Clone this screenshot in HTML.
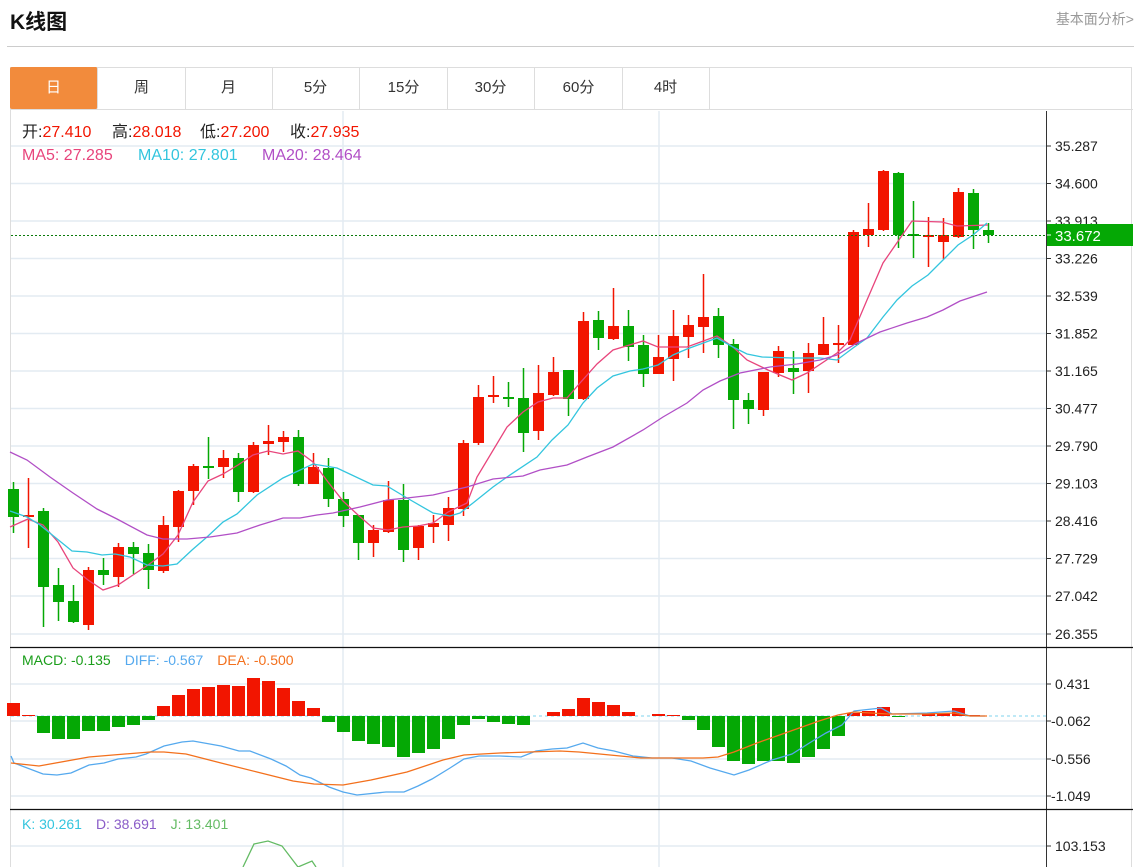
<!DOCTYPE html>
<html><head><meta charset="utf-8">
<style>
body{margin:0;background:#fff;width:1147px;height:867px;overflow:hidden;font-family:"Liberation Sans","Noto Sans CJK SC",sans-serif;position:relative}
.title{position:absolute;left:10px;top:6px;font-size:21px;font-weight:bold;color:#111}
.more{position:absolute;right:13px;top:9px;font-size:14px;color:#999}
.hr{position:absolute;left:7px;top:46px;width:1127px;height:1px;background:#ccc}
.frame{position:absolute;left:10px;top:67px;width:1122px;height:800px;border:1px solid #ddd;border-bottom:none;box-sizing:border-box}
.tabs{position:absolute;left:10px;top:67px;height:43px;width:1123px;border-bottom:1px solid #ddd;box-sizing:border-box}
.tab{position:absolute;top:0;height:42px;width:88px;line-height:42px;text-align:center;font-size:15px;color:#333;border-right:1px solid #ddd;box-sizing:border-box}
.tab.on{background:#f28b3c;color:#fff;border-radius:2px}
svg{position:absolute;left:0;top:0}
svg text{font-family:"Liberation Sans","Noto Sans CJK SC",sans-serif}
</style></head><body>
<div class="title">K线图</div>
<div class="more">基本面分析&gt;</div>
<div class="hr"></div>
<div class="frame"></div>
<div class="tabs">
<div class="tab on" style="left:0">日</div>
<div class="tab" style="left:88px">周</div>
<div class="tab" style="left:175px">月</div>
<div class="tab" style="left:262px">5分</div>
<div class="tab" style="left:350px">15分</div>
<div class="tab" style="left:437px">30分</div>
<div class="tab" style="left:525px">60分</div>
<div class="tab" style="left:612px">4时</div>
</div>
<svg id="s" width="1147" height="867" xmlns="http://www.w3.org/2000/svg"></svg>
<script>
var s='';
function L(x1,y1,x2,y2,c,w,extra){s+='<line x1="'+x1+'" y1="'+y1+'" x2="'+x2+'" y2="'+y2+'" stroke="'+c+'" stroke-width="'+(w||1)+'" '+(extra||'')+'/>';}
function T(x,y,t,c,sz){s+='<text x="'+x+'" y="'+y+'" fill="'+c+'" font-size="'+(sz||14)+'">'+t+'</text>';}
function P(pts,c){s+='<polyline fill="none" stroke="'+c+'" stroke-width="1.3" points="'+pts.map(function(p){return p.join(',')}).join(' ')+'"/>';}
var grid='#e3ebf2';
[146,183.5,221,258.5,296,333.5,371,408.5,446,483.5,521,558.5,596,634].forEach(function(y){L(11,y,1046,y,grid,1.5);});
[684,721,759,796].forEach(function(y){L(11,y,1046,y,grid,1.5);});
L(11,846,1046,846,grid,1.5);
L(343,111,343,867,grid,1.5);L(659,111,659,867,grid,1.5);
L(1046.5,111,1046.5,867,'#333',1);
L(10,647.5,1133,647.5,'#111',1.2);L(10,809.5,1133,809.5,'#111',1.2);
var lab=[[146,'35.287'],[183.5,'34.600'],[221,'33.913'],[258.5,'33.226'],[296,'32.539'],[333.5,'31.852'],[371,'31.165'],[408.5,'30.477'],[446,'29.790'],[483.5,'29.103'],[521,'28.416'],[558.5,'27.729'],[596,'27.042'],[634,'26.355'],[684,'0.431'],[721,'-0.062'],[759,'-0.556'],[796,'-1.049'],[846,'103.153']];
lab.forEach(function(a){L(1047,a[0],1051,a[0],'#333',1);T(a[1][0]=='-'?1051:1055,a[0]+5,a[1],'#222',14);});
var C=[[489,517,482,533,'g'],[515,517,478,548,'r'],[511,587,508,627,'g'],[585,602,568,621,'g'],[601,622,585,623,'g'],[570,625,567,630,'r'],[570,575,558,585,'g'],[547,577,543,587,'r'],[547,554,542,574,'g'],[553,570,544,589,'g'],
[525,571,516,573,'r'],[491,527,490,542,'r'],[466,491,464,505,'r'],[466,467,437,479,'g'],[458,467,450,478,'r'],[458,492,453,502,'g'],[445,492,442,493,'r'],[441,444,425,455,'r'],[437,442,431,452,'r'],[437,484,430,486,'g'],
[467,484,453,484,'r'],[468,499,458,507,'g'],[499,516,492,527,'g'],[515,543,515,560,'g'],[530,543,525,557,'r'],[500,532,481,533,'r'],[500,550,484,562,'g'],[526,548,525,560,'r'],[523,527,515,543,'r'],[508,525,497,541,'r'],
[443,509,440,516,'r'],[397,443,385,445,'r'],[395,397,376,403,'r'],[397,398,382,407,'g'],[398,433,368,452,'g'],[393,431,365,440,'r'],[372,395,357,396,'r'],[370,399,370,416,'g'],[321,399,312,400,'r'],[320,338,311,350,'g'],
[326,339,288,340,'r'],[326,347,310,361,'g'],[345,374,335,387,'g'],[357,374,335,374,'r'],[336,359,310,381,'r'],[325,337,315,358,'r'],[317,327,274,353,'r'],[316,345,308,358,'g'],[344,400,339,429,'g'],[400,409,393,424,'g'],
[372,410,372,416,'r'],[351,373,346,377,'r'],[368,372,351,394,'g'],[353,371,343,393,'r'],[344,355,317,355,'r'],[343,344,325,363,'r'],[232,345,230,345,'r'],[229,235,203,247,'r'],[171,230,170,231,'r'],[173,235,172,248,'g'],
[234,236,201,258,'g'],[235,237,217,267,'r'],[235,242,218,259,'r'],[192,237,188,238,'r'],[193,230,189,249,'g'],[230,235,223,243,'g']];
C.forEach(function(c,i){var x=13.5+15*i;var col=c[4]=='r'?'#f21500':'#05a805';
L(x,c[2],x,c[3],col,1.5);var h=Math.max(c[1]-c[0],2);s+='<rect x="'+(x-5.5)+'" y="'+c[0]+'" width="11" height="'+h+'" fill="'+col+'"/>';});
P([[10,527],[28,519],[43,525],[58,542],[73,568],[88,580],[103,590],[118,585],[133,575],[148,565],[163,554],[178,535],[193,502],[208,481],[223,474],[238,465],[253,455],[268,451],[283,454],[298,451],[313,462],[328,482],[343,501],[358,515],[373,528],[388,530],[403,527],[418,526],[433,523],[448,512],[467,503],[477,477],[507,427],[523,412],[538,402],[553,398],[567,398],[580,383],[597,364],[613,350],[643,341],[658,347],[687,347],[717,336],[733,347],[747,360],[768,370],[792,380],[807,373],[837,353],[850,340],[867,300],[883,263],[912,221],[942,222],[957,226],[988,225]],'#e8457c');
P([[10,511],[27,517],[40,525],[72,551],[87,552],[102,555],[115,554],[130,557],[147,565],[163,566],[177,564],[192,550],[207,537],[223,522],[237,514],[257,495],[283,478],[313,464],[337,468],[373,485],[387,486],[407,498],[433,513],[450,516],[460,513],[473,503],[493,487],[507,477],[537,457],[552,440],[568,425],[583,403],[597,388],[613,376],[630,371],[643,369],[658,365],[673,355],[687,349],[717,338],[733,347],[747,354],[762,357],[792,358],[820,358],[837,360],[853,348],[867,338],[883,317],[897,300],[912,286],[928,275],[943,260],[958,245],[973,235],[987,223]],'#33c5de');
P([[10,452],[27,460],[50,477],[73,493],[97,509],[117,519],[147,535],[163,539],[187,539],[210,537],[237,533],[260,525],[283,518],[300,518],[317,515],[333,513],[360,507],[387,500],[407,498],[433,495],[467,487],[493,479],[523,476],[540,470],[567,465],[587,457],[613,447],[643,430],[663,417],[687,403],[703,390],[720,381],[740,373],[770,367],[797,364],[820,360],[837,355],[857,343],[880,332],[907,323],[927,317],[943,310],[960,301],[987,292]],'#b14fc6');
L(11,235.5,1046,235.5,'#0a7a0a',1,'stroke-dasharray="2,2"');
s+='<rect x="1047" y="224" width="86" height="22" fill="#05a805"/>';
L(1047,235,1051,235,'#fff',1);
T(1055,241,'33.672','#fff',15);
L(11,716,1046,716,'#7fd3ee',1,'stroke-dasharray="3,3"');
var H=[703,715,733,739,739,731,731,727,725,720,706,695,689,687,685,686,678,681,688,701,708,722,732,741,744,747,757,753,749,739,725,719,722,724,725,716,712,709,698,702,705,712,716,714,715,720,730,747,761,764,761,761,763,757,749,736,713,711,707,717,716,713,713,708,715,716];
H.forEach(function(v,i){if(Math.abs(v-716)<1)return;var x=13.5+15*i;var col=v<716?'#f21500':'#05a805';var y=Math.min(v,716),h=Math.abs(v-716);s+='<rect x="'+(x-6.5)+'" y="'+y+'" width="13" height="'+h+'" fill="'+col+'"/>';});
P([[11,756],[14,763],[43,774],[57,775],[71,773],[89,765],[104,763],[118,759],[136,757],[146,754],[164,746],[182,742],[193,741],[221,746],[239,751],[250,751],[271,759],[286,766],[300,775],[311,778],[329,787],[343,792],[357,795],[386,792],[404,792],[418,786],[432,779],[450,768],[464,759],[479,756],[500,756],[521,757],[536,751],[552,749],[567,748],[583,743],[598,748],[614,751],[633,756],[652,758],[672,758],[691,761],[710,768],[734,775],[749,770],[772,760],[792,754],[811,742],[826,733],[842,725],[854,711],[881,708],[892,714],[927,713],[954,711],[970,716],[985,716]],'#55a9ee');
P([[11,763],[39,766],[89,757],[125,754],[150,752],[164,752],[186,754],[221,763],[257,772],[293,781],[314,784],[343,785],[371,780],[407,772],[443,760],[464,755],[500,753],[529,752],[560,751],[579,752],[610,755],[641,758],[703,758],[718,757],[734,752],[757,743],[788,732],[819,721],[838,715],[854,712],[888,714],[927,714],[954,713],[970,716],[987,716]],'#f3701c');
P([[243,867],[254,844],[268,841],[282,846],[298,867],[312,861],[316,867]],'#64bb64');
s+='<text y="137" font-size="16"><tspan x="22" fill="#222">开:</tspan><tspan fill="#f21500">27.410</tspan><tspan x="112" fill="#222">高:</tspan><tspan fill="#f21500">28.018</tspan><tspan x="200" fill="#222">低:</tspan><tspan fill="#f21500">27.200</tspan><tspan x="290" fill="#222">收:</tspan><tspan fill="#f21500">27.935</tspan></text>';
s+='<text y="160" font-size="16"><tspan x="22" fill="#e8457c">MA5:  27.285</tspan><tspan x="138" fill="#33c5de">MA10:  27.801</tspan><tspan x="262" fill="#b14fc6">MA20:  28.464</tspan></text>';
s+='<text x="22" y="665" font-size="14"><tspan fill="#1a9e1a">MACD: -0.135</tspan><tspan fill="#55a9ee" dx="14">DIFF: -0.567</tspan><tspan fill="#f3701c" dx="14">DEA: -0.500</tspan></text>';
s+='<text x="22" y="829" font-size="14"><tspan fill="#33c5de">K: 30.261</tspan><tspan fill="#8a5cc8" dx="14">D: 38.691</tspan><tspan fill="#64bb64" dx="14">J: 13.401</tspan></text>';
document.getElementById('s').innerHTML=s;
</script>
</body></html>
